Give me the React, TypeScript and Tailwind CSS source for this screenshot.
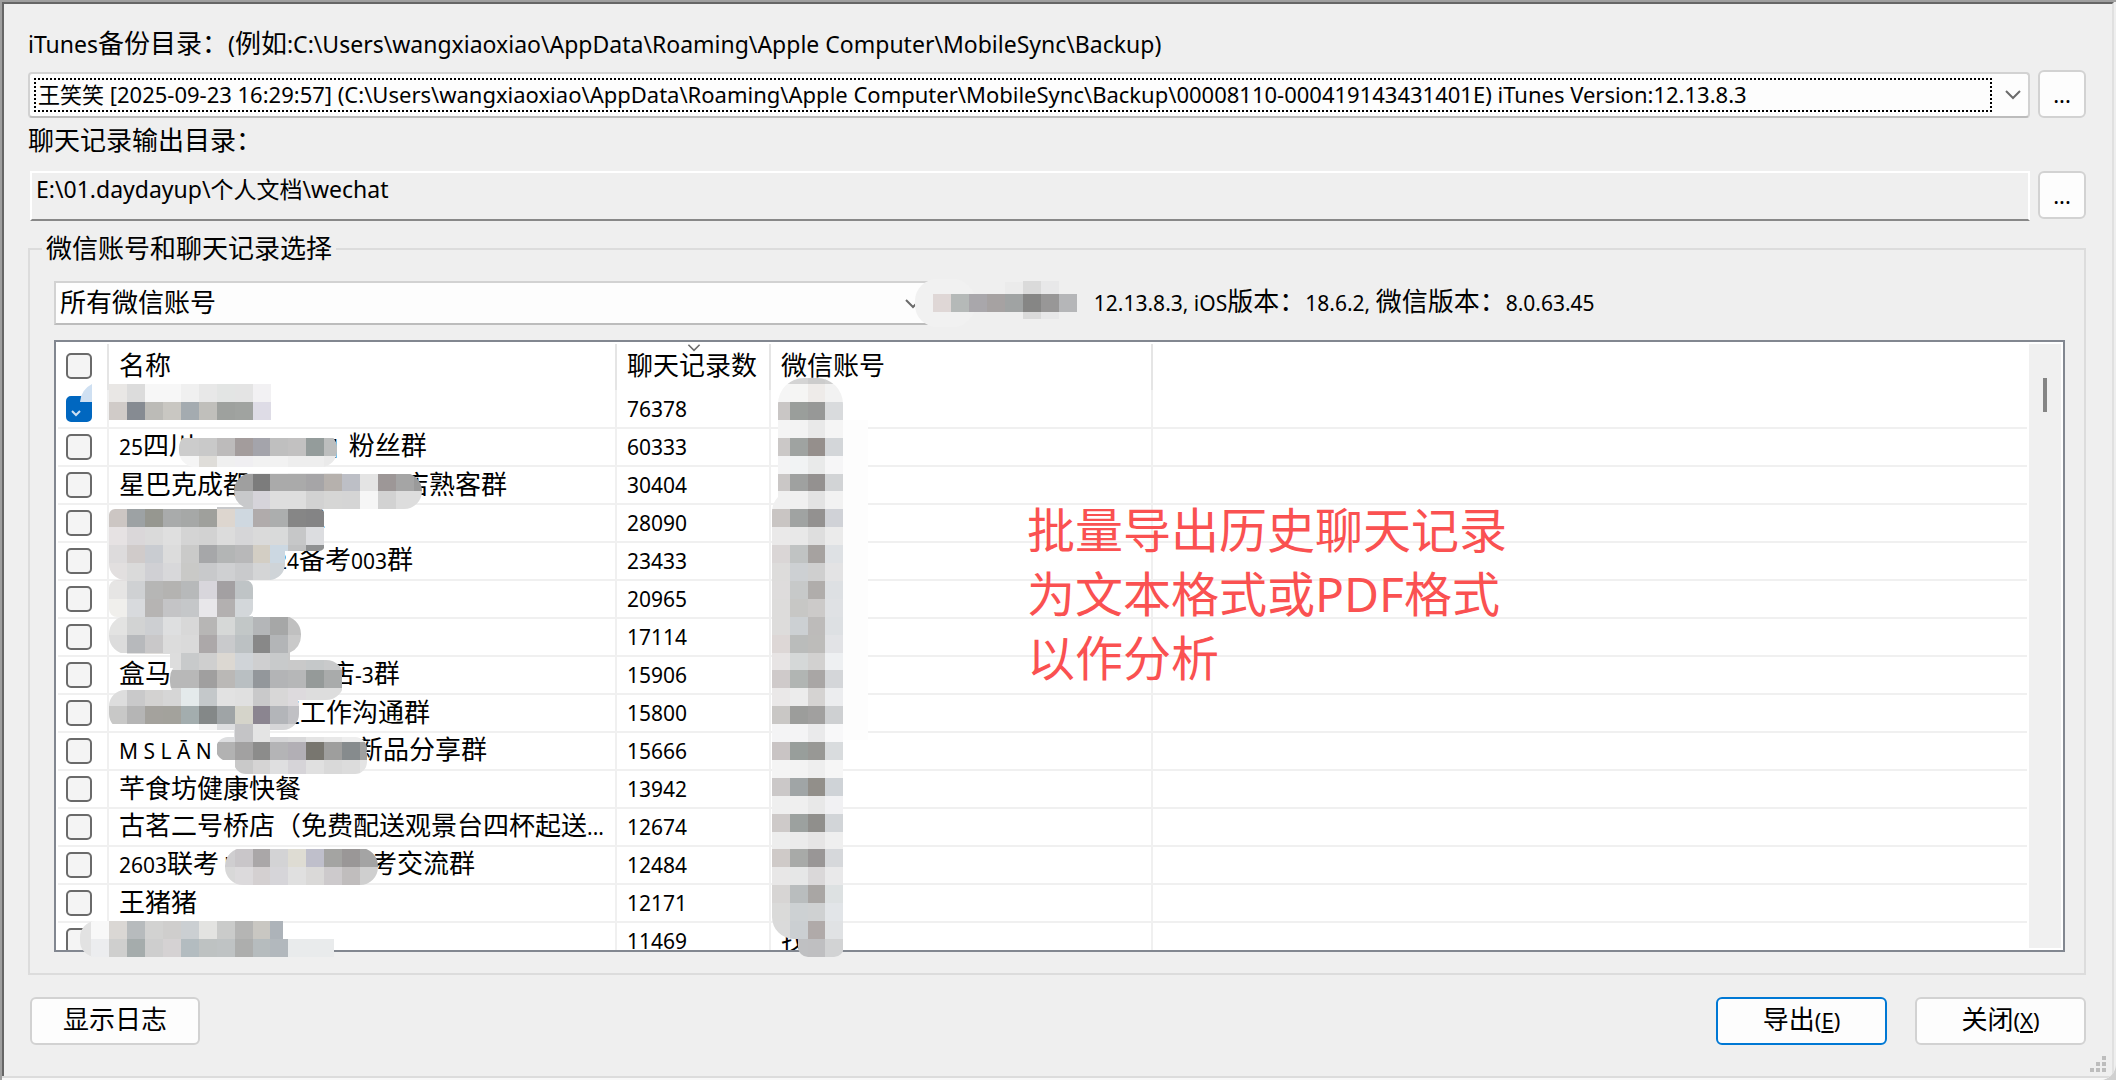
import { useState } from "react";

type Cells = [row: number, col: number, colors: string];
type Patch = { x: number; y: number; w: number; h: number; r: number };
type Chat = { left: string; leftWidth?: string; right?: string; count: number; account?: string };

const CELL = 17.9;

const chats: Chat[] = [
  { left: "", count: 76378 },
  { left: "25四川", leftWidth: "w-[212px]", right: "]  粉丝群", count: 60333 },
  { left: "星巴克成都", leftWidth: "w-[284px]", right: "店熟客群", count: 30404 },
  { left: "", leftWidth: "w-[180px]", right: "群", count: 28090 },
  { left: "", leftWidth: "w-[156px]", right: "24备考003群", count: 23433 },
  { left: "", count: 20965 },
  { left: "", count: 17114 },
  { left: "盒马", leftWidth: "w-[210px]", right: "店-3群", count: 15906 },
  { left: "", leftWidth: "w-[155px]", right: "区工作沟通群", count: 15800 },
  { left: "M S L Ā N", leftWidth: "w-[212px]", right: "城新品分享群", count: 15666 },
  { left: "芊食坊健康快餐", count: 13942 },
  { left: "古茗二号桥店（免费配送观景台四杯起送...", count: 12674 },
  { left: "2603联考 '", leftWidth: "w-[252px]", right: "考交流群", count: 12484 },
  { left: "王猪猪", count: 12171 },
  { left: "", count: 11469, account: "找" },
];

// Mosaic cells, one entry per strip: grid row, first grid column, colours
const nameCells: Cells[] = [
  [0, 0, "e9e7e5 dcdcdc f7f7f7 f7f7f7 f0f0f0 e8e8e8 e3e5e4 e4e4e4 f2f1f3"],
  [1, 0, "d0cbc8 868b92 bcbbb7 c9c7c2 a4abb0 c0bfbb 9ea19e a0a3a0 dedce6"],
  [3, 3, "cccccc cccccc c9c9c9 bdbbbb a39c9c a4a4ab bfbfbf c2c1c1 949c9b bcbebe"],
  [4, 3, "f5f5f5 f5f5f5 dfddd9 f0f0f0 f0eff2 f2f2f2 f2f2f2 eeeeee eeeeee eaeaea"],
  [5, 6, "9f9f9f 9f9f9f 7c7c7c aaaaaa aaaaaa a6a5a7 b6b1ad bdbfc6 e4e4e4 9d9797 a5a5a5 9a9a9a"],
  [6, 6, "c8c9cb c8c9cb d6d4da dedede dedede d2d2d2 d6d6d5 d5d5d5 f6f6f6 d2d2d2 dddddd dddddd"],
  [7, 0, "ccc6c3 9da2a4 969790 a9abab a6a8a7 9fa09c ddd6cf cfd8e0 b0abab acaeae 868686 848485"],
  [8, 0, "e6e2e3 dad7d9 dadada dfdfdf d4d4d4 d2d2d2 dcdcdc d6d6d8 dadada d9dada c6c7c8 dcdde0"],
  [9, 0, "dddbdc d0cbca c9ccd1 dcdcdc cacac9 a6a7a9 b3b5b5 b8b8b9 d3cec4 ccd8e2 c0c1c2 8f9192"],
  [10, 0, "e2dfdf dadada d0d0d4 d8d8da c9c9c7 c8c9cb cfd0d2 c9cacc d4d5d6 cfd4d8"],
  [11, 0, "e6e5e4 cfd1d3 b6b6b5 b4b3b1 b7b9ba d8d6dc a3a0a2 bfc4c6"],
  [12, 0, "f0efec d8dadd b6b4b3 c4c4c6 c5c7c9 e8e7ea b3b0b0 d3d7da"],
  [13, 0, "e3e3e2 d2d3d3 cdcfd2 dedfe0 d8d8d8 b7b6b5 d6d8d7 c2c7c7 b4b6b8 a6a7a7 c0c0c0"],
  [14, 0, "dcdcdc b7b9bc c9c8c9 dcdcdc dadada aca8a9 c9cacc bcc1c3 888888 b3b5b7 c9c9c9"],
  [15, 1, "e0e0e0 e0dedb dddddd c8cacb cfcfcf dcd8d2 d0d4d8 cfcfd0 c8cacb c9c9c9 c5c8c9 c9cacb"],
  [16, 3, "b8b8b8 b8b8b8 a09f9f bab8b6 b9bfc2 93979b b3b4b6 b6b7b8 959a99 a9abab"],
  [17, 0, "dddddd c9c9ca d3d2d1 d6d6d6 e4eaeb c4c8ca e2e2e2 e0e0e0 c9c9ca d8d7d7 dddadd dddddd dddddd"],
  [18, 0, "c8c8c7 b5b5b5 a4a29d a3a29c a3adae 848888 9fa4a6 d5d4ca 8b8590 b3b5b9 c0c0c4"],
  [19, 5, "f4f4f4 dddee0 c4c4c6 e4e4e4 d6d6d8 d9d9da e4e4e4 e8e8e8 eeeeee eeeeee"],
  [20, 6, "b2b2b2 a2a1a1 8c8c8b b4b4b6 b2afb5 78766f 9e9e9d 868b8d a0a0a0"],
  [21, 7, "c9c9c9 d5d4d4 dfdfe0 d6d4d8 e0e0e0 d9d9d9 dcdcdc e4e4e4"],
  [26, 6, "cfced0 c9c6c9 aaa7a8 d3d3d5 dedcd3 bfbfcb a4a4a2 9a9797 a4a4a4"],
  [27, 6, "d8d8d8 dcdadc d4d0d1 d6d5d9 e0e0e0 dad9d8 cdcacc c0bdbd cfcfcf"],
  [30, -2, "e2e2e2 f8f8f8 dad7d4 b7bbbd d2d2d1 cfcecd cbcfd2 e3e3e1 cacbca b5b5b4 c9c7c2 adb3b9"],
  [31, -2, "e2e2e2 ecedef cfcfce a5acac cecece d5d2d3 b3bcc0 bec2c2 bfc3c4 adaead b6bcbe b2b8bd e9ebec e9ebec e9ebec"],
];

const namePatches: Patch[] = [
  { x: 55, y: 44, w: 162, h: 36, r: 0 },
  { x: 125, y: 92, w: 158, h: 35, r: 16 },
  { x: 180, y: 133, w: 188, h: 36, r: 18 },
  { x: 55, y: 169, w: 216, h: 42, r: 6 },
  { x: 55, y: 167, w: 176, h: 73, r: 16 },
  { x: 55, y: 240, w: 144, h: 37, r: 8 },
  { x: 55, y: 276, w: 192, h: 38, r: 18 },
  { x: 116, y: 312, w: 120, h: 16, r: 0 },
  { x: 116, y: 320, w: 174, h: 40, r: 18 },
  { x: 55, y: 350, w: 190, h: 40, r: 16 },
  { x: 180, y: 384, w: 36, h: 20, r: 0 },
  { x: 162, y: 397, w: 151, h: 24, r: 12 },
  { x: 180, y: 404, w: 133, h: 30, r: 12 },
  { x: 171, y: 508, w: 153, h: 37, r: 18 },
  { x: 26, y: 581, w: 60, h: 36, r: 16 },
  { x: 50, y: 581, w: 179, h: 36, r: 0 },
  { x: 200, y: 599, w: 80, h: 18, r: 0 },
];

const accountCells: Cells[] = [
  [-1, 0, "d8d8d8 d4d4d4 cccccc d0d0d0"],
  [0, 0, "f5f5f5 f5f5f4 eeebe9 f2f2f2"],
  [1, 0, "c9c6c5 9a9e9b 979897 d9dbdd"],
  [2, 0, "f4f4f4 f3f3f3 e9e9e9 f5f5f5"],
  [3, 0, "cbc8c7 9fa3a1 958f8c d3d6d9"],
  [4, 0, "f3f3f4 f1f3f4 e9eaea f6f6f7"],
  [5, 0, "cac7c6 9fa1a0 949190 d2d4d6"],
  [6, 0, "f0f0f0 f0f0f0 e3e3e3 f2f2f2"],
  [7, 0, "c9c5c3 a0a3a2 939190 d0d2d7"],
  [8, 0, "eae9e9 e8e8e8 dedede ebebeb"],
  [9, 0, "dad6d6 c0c3c3 a6a2a0 dee1e4"],
  [10, 0, "dddcdb cdd0d3 cfcfcf e3e3e4"],
  [11, 0, "dedcdc c7c9c9 b0adab dde0e3"],
  [12, 0, "dddcdb c7c7c5 cccac9 dfe1e4"],
  [13, 0, "dddcdb ccd0d3 bdbbba dde0e3"],
  [14, 0, "ddd7d6 babcbb bdbcba e2e3e6"],
  [15, 0, "e7e4e4 d5d8d8 d2d1d0 eef0f2"],
  [16, 0, "cfcaca b1b5b3 a9a6a5 d4d6d9"],
  [17, 0, "eae8e8 ececec d5d3d2 ecedef"],
  [18, 0, "c9c7c5 9c9d9b a1a09f ced0d2"],
  [19, 0, "f4f4f5 f4f4f5 eaeaeb f8f8f9"],
  [20, 0, "c9c4c4 989e9b 989895 d9dcde"],
  [21, 0, "f4f4f4 f3f3f3 eeeeee f6f6f6"],
  [22, 0, "cbc8c8 a0a5a6 928f8a cfd3d7"],
  [23, 0, "efefef efefef e8e8e8 f1f1f3"],
  [24, 0, "cecac9 9ca19f 908f8c d2d5d8"],
  [25, 0, "ededed ebebeb e6e5e5 efefef"],
  [26, 0, "cfcac8 a8aaa8 999696 d6d8db"],
  [27, 0, "e8e7e7 e6e7e7 dad8d9 e9e9ea"],
  [28, 0, "d7d5d4 b9bdbe a9a6a4 dde1e2"],
  [29, 0, "dadad9 cdd1d3 cfd1d2 e2e5e8"],
  [30, 0, "dadada cbcfd2 b0aaa9 e0e2e4"],
  [31, 0, "cfcfcf bfc0c2 bfbfc1 d2d3d4"],
];

const accountPatches: Patch[] = [
  { x: 724, y: 38, w: 65, h: 200, r: 26 },
  { x: 718, y: 150, w: 71, h: 449, r: 22 },
  { x: 744, y: 570, w: 46, h: 47, r: 10 },
];

function Mosaic({ id, x, y, cells, patches }: { id: string; x: number; y: number; cells: Cells[]; patches: Patch[] }) {
  return (
    <g>
      <clipPath id={id}>
        {patches.map((p, i) => (
          <rect key={i} x={p.x} y={p.y} width={p.w} height={p.h} rx={p.r} />
        ))}
      </clipPath>
      <g clipPath={`url(#${id})`} shapeRendering="crispEdges">
        {cells.map(([row, col, colors]) =>
          colors.split(" ").map((c, i) => (
            <rect
              key={`${row}-${i}`}
              x={x + (col + i) * CELL}
              y={y + row * CELL}
              width={18}
              height={18}
              fill={`#${c}`}
            />
          ))
        )}
      </g>
    </g>
  );
}

// Latin runs sit a step smaller than the Chinese around them
function Mixed({ text, latin = "text-[21px]" }: { text: string; latin?: string }) {
  return (
    <>
      {text.split(/([\x20-\x7eĀ]+)/).map((part, i) =>
        i % 2 ? (
          <span key={i} className={`whitespace-pre ${latin}`}>
            {part}
          </span>
        ) : (
          part
        )
      )}
    </>
  );
}

function Chevron({ className }: { className: string }) {
  return (
    <svg viewBox="0 0 16 10" className={className} fill="none" stroke="#6b6b6b" strokeWidth="2">
      <path d="M1 1l7 7 7-7" />
    </svg>
  );
}

function BrowseButton({ label }: { label: string }) {
  return (
    <button
      aria-label={label}
      className="h-12 w-12 shrink-0 rounded-md border-2 border-[#d2d2d2] bg-[#fdfdfd] text-[22px] leading-none"
    >
      ...
    </button>
  );
}

function Check({ label, checked, onChange }: { label: string; checked: boolean; onChange: () => void }) {
  return (
    <input
      type="checkbox"
      aria-label={label}
      checked={checked}
      onChange={onChange}
      className="block size-[26px] appearance-none rounded-[5px] border-2 border-[#6a6a6a] bg-[#f4f4f4] checked:border-[#0067c0] checked:bg-[#0067c0]"
    />
  );
}

export default function App() {
  const [picked, setPicked] = useState<number[]>([0]);
  const toggle = (i: number) => setPicked(picked.includes(i) ? picked.filter((n) => n !== i) : [...picked, i]);
  const all = picked.length === chats.length;

  return (
    <div className="bg-[#d0d0d0]">
      <main className="relative flex h-screen flex-col overflow-hidden rounded-br-2xl border-t-2 border-l-2 border-[#9f9f9f] bg-[#efefef] font-['Noto_Sans','Noto_Sans_CJK_SC',sans-serif] text-[26px] leading-8 text-black">
        <div className="mr-[2px] flex min-h-0 flex-1 flex-col border-t-2 border-r-2 border-l-2 border-t-[#666] border-r-[#e0e0e0] border-l-[#666] pr-[26px] pl-6">
          {/* Backup directory */}
          <label htmlFor="backup" className="mt-[23px] block">
            <Mixed
              latin="text-[23px]"
              text="iTunes备份目录：(例如:C:\Users\wangxiaoxiao\AppData\Roaming\Apple Computer\MobileSync\Backup)"
            />
          </label>
          <div className="mt-[10px] flex items-start gap-2">
            <div className="relative mt-[2px] min-w-0 flex-1">
              <select
                id="backup"
                className="block h-[46px] w-full appearance-none rounded-sm border-2 border-[#d2d2d2] border-b-[#bcbcbc] bg-[#fdfdfd] pb-[3px] pl-2 text-[22px]"
              >
                <option>
                  王笑笑 [2025-09-23 16:29:57] (C:\Users\wangxiaoxiao\AppData\Roaming\Apple
                  Computer\MobileSync\Backup\00008110-000419143431401E) iTunes Version:12.13.8.3
                </option>
              </select>
              <span className="pointer-events-none absolute inset-y-[6px] right-[38px] left-[6px] border-2 border-dotted border-black" />
              <Chevron className="pointer-events-none absolute top-[18px] right-[9px] h-[10px] w-4" />
            </div>
            <BrowseButton label="选择备份目录" />
          </div>

          {/* Output directory */}
          <label htmlFor="output" className="mt-[6px] block">
            聊天记录输出目录：
          </label>
          <div className="mt-[15px] flex items-start gap-2">
            <div className="ml-[2px] flex h-[50px] min-w-0 flex-1 border-2 border-white border-b-[#888] pl-1">
              <input
                id="output"
                readOnly
                defaultValue="E:\01.daydayup\个人文档\wechat"
                className="h-8 w-full bg-transparent text-[23px] outline-none"
              />
            </div>
            <BrowseButton label="选择输出目录" />
          </div>

          {/* Accounts and chats */}
          <fieldset className="mt-3 flex min-h-0 min-w-0 flex-1 flex-col border-2 border-[#dcdcdc] pr-[19px] pb-[21px] pl-6">
            <legend className="-ml-3 px-1 pb-[2px] leading-[30px]">微信账号和聊天记录选择</legend>
            <div className="mt-4 flex items-center">
              <div className="relative w-7/16">
                <select
                  aria-label="微信账号"
                  className="block h-11 w-full appearance-none border-2 border-r-0 border-[#d2d2d2] border-b-[#bcbcbc] bg-[#fdfdfd] pb-[3px] pl-1 text-[26px]"
                >
                  <option>所有微信账号</option>
                </select>
                <Chevron className="pointer-events-none absolute top-[18px] right-[13px] h-[10px] w-4" />
                <svg
                  viewBox="0 0 165 48"
                  className="absolute -top-[2px] left-[calc(100%-19px)] h-12 w-[165px]"
                  shapeRendering="crispEdges"
                >
                  <rect width="60" height="48" rx="22" fill="#f1f1f1" shapeRendering="auto" />
                  <path d="M90 3h18v12H90z" fill="#ebebeb" />
                  <path d="M108 2h18v38h-18z" fill="#dadada" />
                  <path d="M126 2h18v38h-18z" fill="#e8e8e9" />
                  {["dfd7d6", "b5b9b8", "a9a7ab", "a6a2a2", "a0a3a3", "868685", "989797", "b5b6b8"].map((c, i) => (
                    <rect key={i} x={18 + i * 18} y="15" width="18" height="18" fill={`#${c}`} />
                  ))}
                </svg>
              </div>
              <p className="ml-40 pb-[2px] whitespace-nowrap">
                <Mixed text="12.13.8.3, iOS版本：18.6.2, 微信版本：8.0.63.45" />
              </p>
            </div>

            <div className="relative mt-[15px] flex min-h-0 flex-1 border-2 border-[#828790] bg-white">
              <div className="min-w-0 flex-1 overflow-hidden pt-[2px] pl-[2px]">
                <table className="w-full table-fixed border-collapse text-left">
                  <colgroup>
                    <col className="w-[50px]" />
                    <col className="w-[508px]" />
                    <col className="w-[154px]" />
                    <col className="w-[382px]" />
                    <col />
                  </colgroup>
                  <thead>
                    <tr className="h-[46px]">
                      <th className="border-r-2 border-[#e5e5e5] pb-[2px] pl-2">
                        <Check
                          label="全选"
                          checked={all}
                          onChange={() => setPicked(all ? [] : chats.map((_, i) => i))}
                        />
                      </th>
                      <th className="border-r-2 border-[#e5e5e5] pb-1 pl-[10px] font-normal">名称</th>
                      <th className="relative border-r-2 border-[#e5e5e5] pb-1 pl-[10px] font-normal whitespace-nowrap">
                        聊天记录数
                        <Chevron className="absolute top-0 left-[70px] h-2 w-[14px]" />
                      </th>
                      <th className="border-r-2 border-[#e5e5e5] pb-1 pl-[10px] font-normal">微信账号</th>
                      <th />
                    </tr>
                  </thead>
                  <tbody>
                    {chats.map((chat, i) => (
                      <tr key={chat.count} className="h-[38px] border-b-2 border-[#f0f0f0] leading-[30px]">
                        <td className="border-r-2 border-[#f0f0f0] pl-2">
                          <Check label={chat.left || "聊天"} checked={picked.includes(i)} onChange={() => toggle(i)} />
                        </td>
                        <td className="border-r-2 border-[#f0f0f0] pb-[2px] pl-[10px] whitespace-nowrap">
                          {chat.leftWidth ? (
                            <span className="flex">
                              <span className={`shrink-0 ${chat.leftWidth}`}>
                                <Mixed text={chat.left} />
                              </span>
                              <span>
                                <Mixed text={chat.right ?? ""} />
                              </span>
                            </span>
                          ) : (
                            <Mixed text={chat.left} />
                          )}
                        </td>
                        <td className="border-r-2 border-[#f0f0f0] pb-[2px] pl-[10px]">
                          <Mixed text={String(chat.count)} />
                        </td>
                        <td className="border-r-2 border-[#f0f0f0] pb-[2px] pl-[10px]">{chat.account}</td>
                        <td />
                      </tr>
                    ))}
                  </tbody>
                </table>
              </div>
              {/* Scrollbar */}
              <div className="m-[2px] w-8 bg-[#f0f0f0] pt-[34px]">
                <div className="mx-auto h-[34px] w-1 bg-[#858585]" />
              </div>
              {/* Redactions over private names */}
              <svg className="pointer-events-none absolute -top-[2px] -left-[2px] h-[620px] w-[900px] overflow-visible">
                <path d="M26 62a22 22 0 0 1 12 -18V62z" fill="#cfe0f2" />
                <path d="M789 80h25v320h-25z" fill="#fdfdfd" />
                <Mosaic id="names" x={55.3} y={44} cells={nameCells} patches={namePatches} />
                <Mosaic id="accounts" x={717.7} y={44} cells={accountCells} patches={accountPatches} />
                <path d="M18 71l4 4 4-4" fill="none" stroke="#cfe0f2" strokeWidth="2" />
              </svg>
              <p className="pointer-events-none absolute top-[156px] left-[971px] text-5xl leading-[64px] whitespace-nowrap text-[#fa5151]">
                批量导出历史聊天记录
                <br />
                为文本格式或PDF格式
                <br />
                以作分析
              </p>
            </div>
          </fieldset>

          {/* Actions */}
          <div className="mt-[22px] mb-[31px] flex gap-7 pl-[2px]">
            <button className="h-12 w-[170px] rounded-md border-2 border-[#d2d2d2] bg-[#fdfdfd] pb-1">显示日志</button>
            <button className="ml-auto h-12 w-[171px] rounded-md border-2 border-[#0078d4] bg-[#fdfdfd] pb-1">
              导出
              <span className="text-[22px]">
                (<u>E</u>)
              </span>
            </button>
            <button className="h-12 w-[171px] rounded-md border-2 border-[#d2d2d2] bg-[#fdfdfd] pb-1">
              关闭
              <span className="text-[22px]">
                (<u>X</u>)
              </span>
            </button>
          </div>
        </div>
        <div className="h-1 border-t-2 border-[#dcdcdc] bg-[#f8f8f8]" />
        <svg viewBox="0 0 16 16" className="absolute right-[10px] bottom-2 size-4" fill="#bdbdbd">
          <path d="M12 0h4v4h-4zM6 6h4v4H6zM12 6h4v4h-4zM0 12h4v4H0zM6 12h4v4H6zM12 12h4v4h-4z" />
        </svg>
      </main>
    </div>
  );
}
